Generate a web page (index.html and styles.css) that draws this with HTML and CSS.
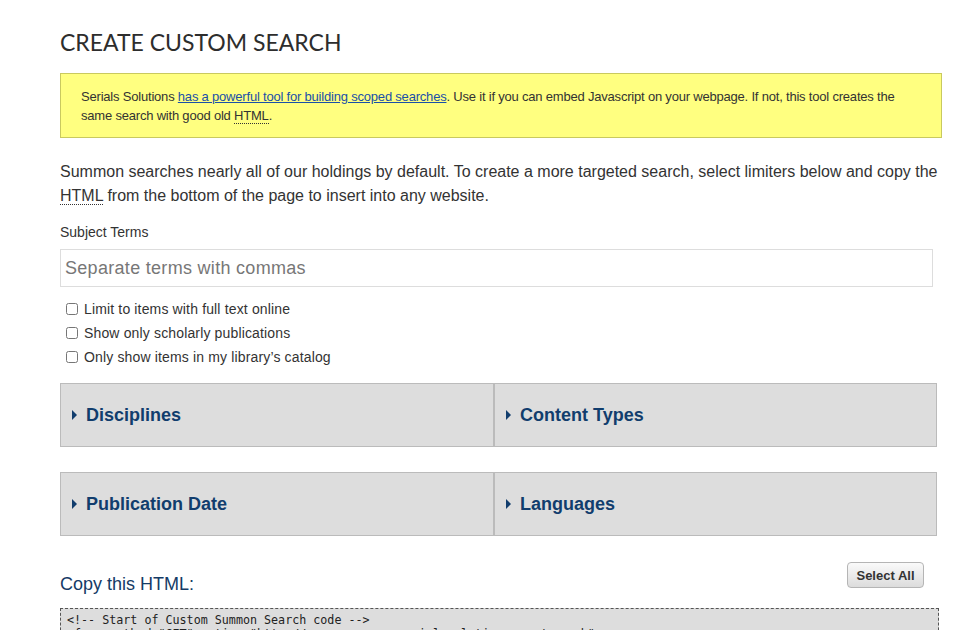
FILE: index.html
```html
<!DOCTYPE html>
<html lang="en">
<head>
<meta charset="utf-8">
<title>Create Custom Search</title>
<link rel="stylesheet" href="styles.css">
</head>
<body>
<div class="page">
  <h1 class="title">CREATE CUSTOM SEARCH</h1>
  <div class="notice">
    Serials Solutions <a href="#">has a powerful tool for building scoped searches</a>. Use it if you can embed Javascript on your webpage. If not, this tool creates the<br>same search with good old <abbr title="HyperText Markup Language">HTML</abbr>.
  </div>
  <p class="intro">Summon searches nearly all of our holdings by default. To create a more targeted search, select limiters below and copy the <abbr title="HyperText Markup Language">HTML</abbr> from the bottom of the page to insert into any website.</p>
  <label class="field-label" for="terms">Subject Terms</label>
  <input class="terms" id="terms" type="text" placeholder="Separate terms with commas">
  <div class="checks">
    <label class="check"><input type="checkbox"> Limit to items with full text online</label>
    <label class="check"><input type="checkbox"> Show only scholarly publications</label>
    <label class="check"><input type="checkbox"> Only show items in my library’s catalog</label>
  </div>
  <div class="acc-row">
    <div class="acc-cell"><span class="tri"></span>Disciplines</div>
    <div class="acc-cell"><span class="tri"></span>Content Types</div>
  </div>
  <div class="acc-row second">
    <div class="acc-cell"><span class="tri"></span>Publication Date</div>
    <div class="acc-cell"><span class="tri"></span>Languages</div>
  </div>
  <div class="copy-head">
    <h2 class="copy-title">Copy this HTML:</h2>
    <button class="select-all" type="button">Select All</button>
  </div>
  <pre class="code">&lt;!-- Start of Custom Summon Search code --&gt;
&lt;form method="GET" action="http://xxxxx.summon.serialssolutions.com/search"&gt;
&lt;input type="text" name="s.q" /&gt;
&lt;/form&gt;</pre>
</div>
</body>
</html>
```

FILE: styles.css
```css
html, body {
  margin: 0;
  padding: 0;
  background: #ffffff;
}
body {
  font-family: "Liberation Sans", Arial, Helvetica, sans-serif;
  color: #333333;
}
.page {
  width: 882px;
  margin-left: 60px;
  padding-top: 27px;
}
.title {
  font-family: Lato, "Liberation Sans", sans-serif;
  font-weight: 400;
  font-size: 23px;
  line-height: 30px;
  margin: 0;
  color: #2d2d2d;
}
.notice {
  margin-top: 16px;
  background: #ffff80;
  border: 1px solid #c9c95f;
  padding: 13px 12px 12px 20px;
  font-size: 13px;
  line-height: 19px;
  letter-spacing: -0.2px;
  color: #333333;
}
.notice a {
  color: #1a50a8;
  text-decoration: underline;
}
abbr {
  text-decoration: none;
  border-bottom: 1px dotted #333333;
}
.intro {
  margin: 22px 0 0 0;
  width: 880px;
  font-size: 16px;
  line-height: 24px;
}
.field-label {
  display: block;
  margin-top: 14px;
  font-size: 14px;
  line-height: 20px;
}
.terms {
  display: block;
  box-sizing: border-box;
  margin-top: 7px;
  width: 873px;
  height: 38px;
  border: 1px solid #dddddd;
  padding: 0 4px;
  font-family: "Liberation Sans", Arial, sans-serif;
  font-size: 18px;
  letter-spacing: 0.3px;
  color: #333333;
  outline: none;
}
.terms::placeholder {
  color: #777777;
}
.checks {
  margin-top: 10px;
  display: flex;
  flex-direction: column;
}
.check {
  display: flex;
  align-items: center;
  height: 24px;
  font-size: 14px;
  letter-spacing: 0.15px;
}
.check input {
  margin: 0 6px 0 6px;
  width: 12px;
  height: 12px;
}
.acc-row {
  margin-top: 14px;
  display: grid;
  grid-template-columns: 434px 443px;
}
.acc-row.second {
  margin-top: 25px;
}
.acc-cell {
  box-sizing: border-box;
  height: 64px;
  background: #dddddd;
  border: 1px solid #bbbbbb;
  display: flex;
  align-items: center;
  padding-left: 11px;
  font-weight: 700;
  font-size: 18px;
  color: #113d6d;
}
.tri {
  display: inline-block;
  width: 0;
  height: 0;
  border-left: 5px solid #113d6d;
  border-top: 5px solid transparent;
  border-bottom: 5px solid transparent;
  margin-right: 9px;
}
.copy-head {
  margin-top: 26px;
  display: flex;
  justify-content: space-between;
  align-items: flex-start;
  width: 864px;
}
.copy-title {
  margin: 10px 0 0 0;
  font-weight: 400;
  font-size: 18px;
  line-height: 24px;
  color: #153b66;
}
.select-all {
  width: 77px;
  height: 26px;
  border: 1px solid #b5b5b5;
  border-radius: 4px;
  background: linear-gradient(#fafafa, #dcdcdc);
  font-family: "Liberation Sans", Arial, sans-serif;
  font-weight: 700;
  font-size: 13px;
  color: #333333;
  padding: 0;
}
.code {
  box-sizing: border-box;
  margin: 12px 0 0 0;
  width: 879px;
  background: #dddddd;
  border: 1px dashed #555555;
  padding: 4px 6px;
  font-family: "DejaVu Sans Mono", monospace;
  font-size: 11.7px;
  line-height: 14px;
  color: #222222;
}
```
